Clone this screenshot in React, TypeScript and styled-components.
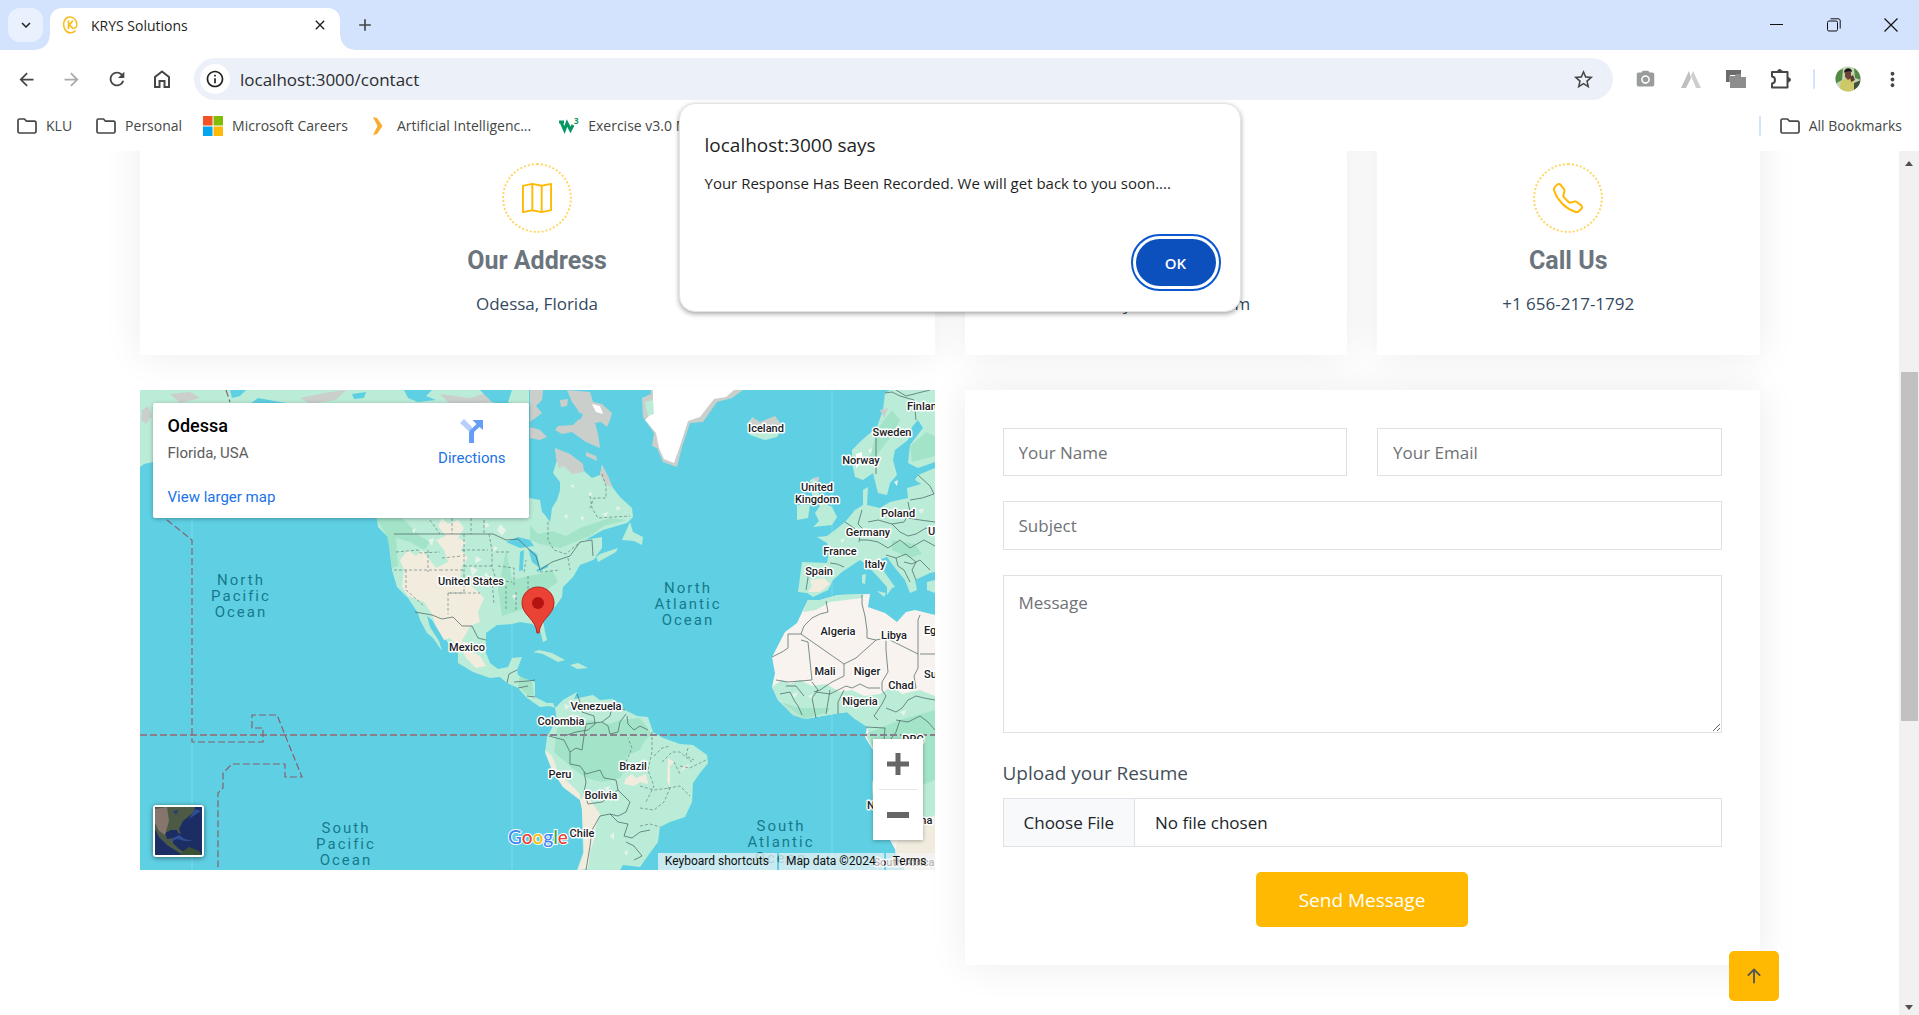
import React from "react";
import styled, { createGlobalStyle, css } from "styled-components";
import { BsMap, BsTelephone, BsEnvelope, BsArrowUpShort } from "react-icons/bs";
import {
  MdArrowBack,
  MdArrowForward,
  MdRefresh,
  MdInfoOutline,
  MdStarBorder,
  MdMoreVert,
  MdClose,
  MdAdd,
  MdPhotoCamera,
  MdKeyboardArrowDown,
} from "react-icons/md";

const ui = `"Open Sans", "Noto Sans", sans-serif`;
const roboto = `Roboto, "Liberation Sans", sans-serif`;
const amber = "#ffb902";
const ink = "#444746";

const GlobalStyle = createGlobalStyle`
  *, *::before, *::after { box-sizing: border-box; }
  body { margin: 0; background: #fff; font-family: ${ui}; overflow: hidden; }
  button, input, textarea { font-family: inherit; }
  h1, h2, h3, p { margin: 0; }
`;

/* ---------- browser frame ---------- */

const Window = styled.div`
  position: relative;
  display: flex;
  flex-direction: column;
  height: 100vh;
`;

const TabStrip = styled.header`
  display: flex;
  align-items: flex-end;
  height: 50px;
  padding: 0 0 0 8px;
  background: #d3e3fd;
`;

const plainButton = css`
  display: inline-flex;
  align-items: center;
  justify-content: center;
  padding: 0;
  border: 0;
  background: none;
  color: ${ink};
`;

const TabSearch = styled.button`
  ${plainButton}
  width: 35px;
  height: 34px;
  margin: 0 7px 8px 0;
  border-radius: 12px;
  background: #e9f1fe;
  color: #1f1f1f;
`;

const Tab = styled.div`
  position: relative;
  display: flex;
  align-items: center;
  gap: 12px;
  width: 290px;
  height: 42px;
  padding: 0 12px 8px;
  border-radius: 12px 12px 0 0;
  background: #fff;
  color: #1f1f1f;
  font-size: 14px;

  &::before,
  &::after {
    content: "";
    position: absolute;
    bottom: 0;
    width: 14px;
    height: 14px;
  }
  &::before {
    right: 100%;
    background: radial-gradient(circle at 0 0, transparent 13px, #fff 14px);
  }
  &::after {
    left: 100%;
    background: radial-gradient(circle at 100% 0, transparent 13px, #fff 14px);
  }
`;

const TabTitle = styled.span`
  flex: 1;
`;

const TabButton = styled.button`
  ${plainButton}
  width: 16px;
  height: 20px;
  color: #1f1f1f;
`;

const NewTab = styled.button`
  ${plainButton}
  width: 34px;
  height: 34px;
  margin: 0 auto 8px 8px;
`;

const WindowButton = styled.button`
  ${plainButton}
  width: 57px;
  height: 50px;
  color: #111;
`;

const Toolbar = styled.nav`
  display: flex;
  align-items: center;
  height: 58px;
  padding: 0 4px;
  background: #fff;
`;

const ToolButton = styled.button<{ $dim?: boolean }>`
  ${plainButton}
  width: 45px;
  height: 42px;
  color: ${(p) => (p.$dim ? "#a9abab" : ink)};
`;

const Omnibox = styled.div`
  display: flex;
  flex: 1;
  align-items: center;
  gap: 10px;
  height: 42px;
  margin: 0 10px;
  padding: 0 18px 0 6px;
  border-radius: 21px;
  background: #ecf0f9;
`;

const SiteInfo = styled.button`
  ${plainButton}
  width: 30px;
  height: 30px;
  border-radius: 50%;
  background: #fff;
  color: #1f1f1f;
`;

const Address = styled.input`
  flex: 1;
  border: 0;
  padding: 0;
  background: none;
  color: #2b2d2e;
  font-size: 17px;
  outline: 0;
`;

const Divider = styled.span<{ $gap: number }>`
  width: 2px;
  height: 20px;
  margin: 0 ${(p) => p.$gap}px;
  border-radius: 1px;
  background: #d3e3fd;
`;

const Bookmarks = styled.nav`
  display: flex;
  align-items: center;
  height: 43px;
  padding: 0 17px 8px;
`;

const Bookmark = styled.a<{ $end: number }>`
  display: inline-flex;
  align-items: center;
  gap: 9px;
  margin-right: ${(p) => p.$end}px;
  color: ${ink};
  font-size: 14px;
  line-height: 20px;
  white-space: nowrap;
  text-decoration: none;
`;

const BookmarkSpacer = styled.span`
  flex: 1;
`;

/* ---------- page ---------- */

const Viewport = styled.div`
  display: flex;
  flex: 1;
  min-height: 0;
`;

const Page = styled.main`
  position: relative;
  flex: 1;
  overflow: hidden;
  background: #fff;
`;

const Container = styled.div`
  display: grid;
  grid-template-columns: repeat(12, 1fr);
  align-items: start;
  gap: 35px 30px;
  max-width: 1650px;
  margin: -38px auto 0;
  padding: 0 15px;
`;

const card = css`
  background: #fff;
  box-shadow: 0 0 37px rgba(0, 0, 0, 0.08);
`;

const InfoCard = styled.section<{ $span: number }>`
  ${card}
  grid-column: span ${(p) => p.$span};
  display: flex;
  flex-direction: column;
  align-items: center;
  padding: 50px 0 37px;
`;

const IconRing = styled.span`
  display: grid;
  place-items: center;
  width: 70px;
  height: 70px;
  border: 2px dotted #ffd565;
  border-radius: 50%;
  color: ${amber};
`;

const InfoTitle = styled.h3`
  margin-top: 13px;
  color: #6c757d;
  font: 700 25px/30px ${roboto};
`;

const InfoText = styled.p`
  margin-top: 14px;
  color: #34495e;
  font-size: 17px;
  line-height: 28px;
`;

const FormCard = styled.form`
  ${card}
  grid-column: span 6;
  display: grid;
  grid-template-columns: 1fr 1fr;
  gap: 25px 30px;
  padding: 38px;
`;

const field = css`
  width: 100%;
  border: 1px solid #dee2e6;
  border-radius: 0;
  background: #fff;
  color: #212529;
  font-size: 17px;
  &::placeholder {
    color: #6f7275;
    opacity: 1;
  }
`;

const Field = styled.input<{ $wide?: boolean }>`
  ${field}
  height: ${(p) => (p.$wide ? 49 : 48)}px;
  padding: 0 15px;
  grid-column: ${(p) => (p.$wide ? "1 / -1" : "auto")};
`;

const Message = styled.textarea`
  ${field}
  display: block;
  grid-column: 1 / -1;
  height: 158px;
  padding: 12px 15px;
  line-height: 29px;
  resize: vertical;
`;

const Upload = styled.div`
  grid-column: 1 / -1;
  display: grid;
  gap: 10px;
`;

const UploadLabel = styled.label`
  color: #444f5a;
  font-size: 19px;
  line-height: 30px;
`;

const FileInput = styled.input`
  ${field}
  height: 49px;
  line-height: 47px;
  &::file-selector-button {
    height: 47px;
    margin: 0 20px 0 0;
    padding: 0 20px;
    border: 0;
    border-right: 1px solid #dee2e6;
    background: #f8f9fa;
    color: #212529;
    font: inherit;
  }
`;

const Send = styled.button`
  grid-column: 1 / -1;
  justify-self: center;
  height: 55px;
  padding: 0 43px;
  border: 0;
  border-radius: 5px;
  background: ${amber};
  color: #fff;
  font-size: 19px;
  font-weight: 500;
`;

const BackToTop = styled.a`
  position: absolute;
  right: 120px;
  bottom: 14px;
  display: grid;
  place-items: center;
  width: 50px;
  height: 50px;
  border-radius: 5px;
  background: ${amber};
  color: #555;
`;

const Scrollbar = styled.aside`
  display: flex;
  flex-direction: column;
  align-items: center;
  width: 20px;
  background: #f1f1f1;
`;

const ScrollArrow = styled.span<{ $down?: boolean }>`
  width: 0;
  height: 0;
  margin: ${(p) => (p.$down ? "auto 0 5px" : "10px 0 0")};
  border: 4px solid transparent;
  border-width: ${(p) => (p.$down ? "5px 4px 0" : "0 4px 5px")};
  border-color: ${(p) => (p.$down ? "#505050 transparent transparent" : "transparent transparent #505050")};
`;

const ScrollThumb = styled.span`
  width: 17px;
  height: 349px;
  margin-top: 206px;
  background: #c1c1c1;
`;

/* ---------- map ---------- */

const MapFrame = styled.section`
  position: relative;
  grid-column: span 6;
  height: 480px;
  overflow: hidden;
  background: #5fd0e4;
  font-family: ${roboto};
`;

const MapDrawing = styled.svg`
  display: block;
  width: 100%;
  height: 100%;
`;

const PlaceCard = styled.div`
  position: absolute;
  top: 13px;
  left: 13px;
  display: flex;
  justify-content: space-between;
  width: 376px;
  height: 115px;
  padding: 10px 23px 10px 15px;
  border-radius: 2px;
  background: #fff;
  box-shadow: 0 1px 4px rgba(0, 0, 0, 0.3);
`;

const PlaceText = styled.div`
  display: flex;
  flex-direction: column;
`;

const PlaceName = styled.h2`
  color: #000;
  font-size: 18px;
  font-weight: 500;
  line-height: 26px;
`;

const PlaceRegion = styled.p`
  margin-top: 4px;
  color: #5b5b5b;
  font-size: 15px;
  line-height: 20px;
`;

const MapLink = styled.a`
  color: #1a73e8;
  font-size: 15px;
  line-height: 20px;
  text-decoration: none;
`;

const LargerMap = styled(MapLink)`
  margin-top: 24px;
`;

const Directions = styled(MapLink)`
  display: flex;
  flex-direction: column;
  align-items: center;
  gap: 5px;
  padding-top: 6px;
`;

const ZoomBox = styled.div`
  position: absolute;
  right: 12px;
  bottom: 30px;
  display: flex;
  flex-direction: column;
  width: 50px;
  padding: 0 6px;
  background: #fff;
  box-shadow: 0 1px 4px rgba(0, 0, 0, 0.3);
`;

const ZoomButton = styled.button`
  ${plainButton}
  height: 50px;
  & + & {
    height: 51px;
    border-top: 1px solid #e6e6e6;
  }
`;

const Satellite = styled.button`
  position: absolute;
  bottom: 13px;
  left: 13px;
  width: 51px;
  height: 52px;
  padding: 0;
  overflow: hidden;
  border: 2px solid #fff;
  border-radius: 3px;
  background: #1a2b5e;
  box-shadow: 0 1px 5px rgba(0, 0, 0, 0.5);
`;

const Attribution = styled.div`
  position: absolute;
  right: 0;
  bottom: 0;
  display: flex;
  gap: 2px;
  height: 17px;
`;

const Credit = styled.a`
  padding: 0 8px 0 7px;
  background: rgba(245, 245, 245, 0.7);
  color: #111;
  font-size: 12px;
  line-height: 17px;
  text-decoration: none;
`;

const LAND = "#bbecd8";
const GREEN = "#93e0bf";
const SAND = "#f2ecdf";
const DESERT = "#f8f3ee";
const ROCK = "#cbcfcb";

const lands = [
  // North and Central America
  "M237 128L238 137L248 147L250 163L252 180L257 197L268 208L278 223L280 230L287 243L293 248L302 261L299 251L290 237L287 226L292 230L300 243L310 255L318 263L318 273L333 282L350 288L360 287L367 293L378 298L387 308L400 317L410 316L415 318L413 313L407 313L395 307L395 292L383 288L378 285L377 280L382 267L372 268L368 277L358 279L350 273L346 263L346 243L357 235L372 234L380 232L392 234L400 240L403 252L407 250L405 242L403 230L400 223L415 217L422 207L423 197L433 187L440 175L453 170L460 164L478 158L476 162L458 172L456 166L462 158L462 147L445 150L463 140L487 133L493 127L492 118L480 107L473 98L468 87L462 75L460 85L452 88L443 80L430 66L415 58L417 70L413 83L420 92L420 100L417 110L412 118L411 126L410 132L405 125L402 122L400 110L389 108L300 60L240 90Z",
  // Alaska and the Arctic shore
  "M0 0L389 0L389 36L380 24L372 16L330 14L13 14L13 72L4 74L0 77Z",
  // Newfoundland
  "M490 132L493 142L503 147L502 155L494 151L482 150Z",
  // Caribbean
  "M393 262L399 260L412 263L425 270L418 272L403 264Z",
  "M430 275L438 273L448 278L437 279Z",
  // South America
  "M415 318L423 310L437 302L434 309L453 305L460 310L473 309L485 320L497 326L508 327L513 342L523 348L540 354L553 355L567 365L568 373L560 383L553 393L552 412L545 427L530 432L520 437L518 452L507 467L500 477L483 475L480 480L437 480L443 463L442 417L440 410L423 397L412 380L405 363L407 347L412 338L417 330Z",
  // Scandinavia and Finland
  "M745 3L743 20L737 37L722 50L712 60L712 73L715 87L723 90L733 83L738 103L747 105L750 93L757 85L753 70L755 60L768 50L772 37L778 30L783 38L770 55L768 73L778 78L795 72L795 0L750 0Z",
  // Continental Europe
  "M795 78L778 85L775 90L781 94L767 98L768 108L750 112L740 118L727 115L728 97L723 100L723 115L715 120L705 132L695 140L687 146L677 147L687 153L689 162L687 173L662 172L658 202L667 203L673 207L688 200L693 190L702 182L711 176L720 170L727 175L738 187L747 197L747 205L752 198L755 197L743 180L738 170L747 167L755 178L765 190L770 203L777 200L775 190L790 183L795 182Z",
  "M787 192L795 190L795 203L787 200Z",
  "M737 201L746 203L744 207Z",
  "M722 185L726 184L725 194L722 193Z",
  // Britain and Ireland
  "M670 90L679 87L677 100L684 113L692 117L697 127L692 135L673 137L679 131L675 123L680 116L672 105Z",
  "M657 115L670 115L668 128L657 130Z",
  "M607 34L612 28L620 33L635 27L643 37L637 47L625 50L610 45Z",
];

const africa =
  "M668 210L680 210L698 205L730 204L728 217L745 223L757 232L766 222L775 220L795 225L795 480L765 480L757 463L750 450L733 410L732 393L738 378L733 360L725 347L727 337L723 329L715 329L707 322L693 324L665 329L653 325L638 310L632 297L635 283L632 267L645 242L657 233L663 220Z";

const greenPatches = [
  "M236 128L262 128L280 146L290 152L284 160L270 152L256 148L258 176L252 178L250 160L246 145Z",
  "M366 160L372 190L388 186L400 184L412 180L418 192L404 202L400 214L386 218L362 226L358 200Z",
  "M390 135L398 144L412 141L426 146L440 138L452 134L470 128L486 130L464 136L450 146L435 152L420 158L400 154L390 150Z",
  "M417 338L434 334L450 330L470 334L480 330L500 328L512 344L504 352L500 360L486 366L488 376L480 388L462 392L446 388L432 378L414 362Z",
  "M725 344L760 330L795 320L795 390L770 400L745 380Z",
  "M640 312L660 318L690 318L688 322L665 329L653 325Z",
  "M738 38L752 20L760 30L750 48L736 66L728 74Z",
  "M770 56L786 42L795 46L795 66L772 72Z",
  "M752 150L775 154L782 164L770 168L752 160Z",
  "M380 286L392 292L394 306L386 304L378 296Z",
  "M378 30L389 36L389 14L380 14Z",
];

const sandPatches = [
  "M302 128L308 134L318 130L324 138L318 148L326 152L321 160L328 168L322 176L320 190L330 194L344 208L338 222L340 232L330 236L326 244L318 256L310 248L304 250L296 236L292 224L284 212L268 206L262 196L264 180L260 170L268 160L276 166L282 160L290 170L296 178L308 172L304 160L296 150L306 146L298 136Z",
  "M318 250L326 252L334 256L332 262L340 266L346 276L336 278L326 268Z",
  "M440 410L446 404L460 424L456 436L454 450L450 462L448 478L438 480L444 462L442 420Z",
  "M405 360L412 366L418 382L430 394L440 404L440 410L423 397L412 380Z",
  "M486 388L492 384L496 388L506 384L508 394L500 392L494 396L484 394Z",
  "M528 368L534 372L530 376L530 398L527 390Z",
  "M540 382L546 378L550 374L544 376Z",
  "M670 190L684 188L690 194L680 202L668 202L672 196Z",
  "M760 440L795 425L795 480L765 480L755 462Z",
];

// Small clearings that break up the forest tint
const speckles =
  "M272 140L276 138L274 144Z M346 132L350 136L344 138Z M360 134L366 140L362 146L357 140Z M336 166L342 170L335 173Z M354 156L358 158L353 162Z M372 206L376 204L375 210Z M288 150L294 148L292 156Z M330 176L338 180L332 186Z M346 182L350 188L344 186Z M430 96L433 94L434 98Z M448 104L452 102L451 107Z M424 126L428 124L427 129Z M462 124L468 122L466 127Z M440 128L444 126L443 131Z M476 116L481 118L477 121Z M424 314L430 316L426 320Z M446 312L454 314L450 318Z M466 316L470 314L469 320Z M432 324L437 326L431 329Z M464 398L470 396L468 402Z M500 372L505 368L504 375Z M470 446L474 442L474 450Z M484 462L488 460L487 466Z M754 92L758 90L757 96Z M728 60L732 58L731 64Z M778 120L784 118L782 124Z M700 150L704 148L703 153Z M652 304L658 302L655 308Z M668 306L672 304L672 310Z M760 322L766 320L764 326Z";

const rocks = [
  "M390 0L403 0L402 10L396 16L402 23L390 32Z",
  "M427 0L450 2L453 12L462 14L472 23L470 30L467 37L461 32L455 33L458 44L460 58L446 52L432 42L422 44L415 40L418 36L433 35L440 28L438 20L432 12Z",
  "M390 37L400 40L407 47L400 50L390 48Z",
  "M415 58L430 64L443 74L444 82L432 84L424 76L419 78L416 68Z",
  "M462 75L469 88L472 98L466 94L460 85Z",
  "M2 20L8 16L12 26L6 34L1 30Z",
  "M30 4L50 2L60 8L40 13Z M160 8L190 2L206 0L196 10L170 14Z M300 4L330 8L350 2L360 12L310 14Z",
  "M420 10L428 9L427 16L421 17Z",
  "M740 20L748 18L744 28Z",
  "M612 27L620 32L635 26L643 37L630 38L622 34L610 36Z",
  "M446 62L456 66L457 71L446 66Z",
  "M672 88L679 87L678 92Z",
];

const waterPatches = [
  "M90 0L106 0L100 6L92 8Z M118 8L146 13L110 14Z M264 0L292 0L286 6L296 10L278 12L268 8Z M340 0L372 0L368 12L380 20L352 12Z M212 4L226 2L224 8L214 9Z",
  "M366 152L378 147L390 150L394 156L380 158Z M380 162L384 160L383 180L379 181Z M388 158L397 164L400 178L392 172Z M396 180L408 174L408 177L398 182Z",
  "M438 22L443 24L440 30L436 27Z",
];

const borders = [
  "M254 144L353 144L366 150L378 149L396 166L400 180L412 172L430 166L440 152L452 150L453 166",
  "M275 222L292 225L302 229L313 227L322 236L332 236L338 248L346 250",
  "M367 293L369 284L377 280M374 292L388 291L395 290M378 298L388 296M387 306L395 307",
  "M437 304L440 312L442 322L454 326L455 334L448 340L436 342L424 346M485 320L472 316L470 326L462 332L446 334L444 346L442 360L436 358L430 362L424 350L409 346",
  "M430 362L430 374L440 376L446 384L460 380L464 388L476 390L478 400L470 406L462 412L448 414L444 402L446 392L444 382M478 400L490 412L486 422L478 426L470 424L460 426L452 440L450 456L446 480",
  "M470 424L478 432L488 434L484 446L492 448L500 442L510 440M486 452L494 456L502 466L494 470",
  "M487 326L488 334L494 340L500 336L508 340M462 332L468 336L470 344L478 342L480 332L486 324",
  "M736 38L736 84M745 3L752 2L760 6L774 10L776 30M756 0L766 6L782 2L790 0",
  "M722 120L718 134L724 140L716 144M705 132L714 138L720 146L719 152M768 112L770 122L764 132L752 134L738 130L728 132M778 85L790 96L794 104L782 108L770 110M768 128L780 130L795 132M752 134L760 142L768 146L776 144L786 138L795 140",
  "M720 150L728 150L738 152L748 158L760 150L770 158L784 150L795 156M690 173L697 174L704 177M667 177L668 188L666 200M746 165L756 168L758 176L764 180L770 192M764 172L772 174L780 170L790 180M756 168L766 164L776 172L772 180L776 190",
  "M686 211L688 222L680 224L672 228L664 236L661 244L704 274L716 268L736 250L727 248L727 240L725 226L722 214L722 205M661 244L648 244L648 258L642 262L632 267M661 250L668 252L672 290L648 292L636 290M704 274L704 286L692 292L680 300L674 302M736 250L746 248L746 260L748 282L742 292L742 300L746 306L742 314L734 326L738 330M746 248L762 256L778 264L778 230L780 225",
  "M778 264L778 278L774 286L776 298L770 300M780 264L795 264M706 296L712 298L720 294L728 298L740 298M704 300L698 312L698 324M690 300L686 324M672 292L678 300L672 308L676 328M676 302L690 304L706 296M640 304L650 302L654 310L658 316L662 325M646 296L656 296L664 306",
  "M726 337L745 338L744 350L736 352M746 318L756 322L762 318L768 310L776 306L784 308L795 310M756 330L768 332L780 326L788 332L795 340M760 330L756 342L750 350",
];

const stateLines =
  "M256 162L278 160L280 163L300 162M254 180L300 180M266 180L266 200L284 216M288 160L288 182M290 130L300 144M312 128L312 144M324 144L324 203L308 203L308 224M302 168L322 166M331 128L331 144M344 130L344 144M322 160L348 160M300 180L324 180M308 203L340 203M324 176L352 176M349 144L352 160L352 176L356 190M328 190L356 190M352 190L354 214M356 162L370 162M358 176L374 178L374 196M356 190L372 192M366 196L366 220M376 202L376 220M388 186L388 202L410 202M390 212L404 218M384 182L386 170M400 182L420 180M428 168L430 180M408 132L408 150L414 160L426 164L440 152M450 106L452 118L458 128L490 126M462 84L466 96L466 108L454 108L450 118";

const brazilLines =
  "M486 372L492 358L488 348M512 342L512 362L508 380L514 396L506 412M514 366L522 358L530 356M522 372L532 362L540 362L552 372M534 372L540 384M528 398L540 396L550 406M500 396L514 400L530 398L524 412L514 420L500 418M540 376L550 378L566 370M500 436L510 434L520 437M548 358L546 366L554 370";

const dateLine =
  "M27 130L52 150L52 352L123 352L123 338L112 338L112 325L137 325L162 387L145 387L145 374L92 374L83 383L83 398L78 403L78 480M86 0L90 12";

type Label = { text: string; x: number; y: number; start?: boolean };

const countries: Label[] = [
  { text: "United States", x: 331, y: 195 },
  { text: "Iceland", x: 626, y: 42 },
  { text: "Finland", x: 767, y: 20, start: true },
  { text: "Sweden", x: 752, y: 46 },
  { text: "Norway", x: 721, y: 74 },
  { text: "United", x: 677, y: 101 },
  { text: "Kingdom", x: 677, y: 113 },
  { text: "Poland", x: 758, y: 127 },
  { text: "Germany", x: 728, y: 146 },
  { text: "Ukraine", x: 788, y: 145, start: true },
  { text: "France", x: 700, y: 165 },
  { text: "Italy", x: 735, y: 178 },
  { text: "Spain", x: 679, y: 185 },
  { text: "Mexico", x: 327, y: 261 },
  { text: "Algeria", x: 698, y: 245 },
  { text: "Libya", x: 754, y: 249 },
  { text: "Egypt", x: 784, y: 244, start: true },
  { text: "Mali", x: 685, y: 285 },
  { text: "Niger", x: 727, y: 285 },
  { text: "Chad", x: 761, y: 299 },
  { text: "Sudan", x: 784, y: 288, start: true },
  { text: "Nigeria", x: 720, y: 315 },
  { text: "DRC", x: 773, y: 353 },
  { text: "Venezuela", x: 456, y: 320 },
  { text: "Colombia", x: 421, y: 335 },
  { text: "Brazil", x: 493, y: 380 },
  { text: "Peru", x: 420, y: 388 },
  { text: "Bolivia", x: 461, y: 409 },
  { text: "Chile", x: 442, y: 447 },
  { text: "Namibia", x: 727, y: 419, start: true },
  { text: "Botswana", x: 768, y: 434 },
  { text: "South Africa", x: 764, y: 476 },
];

const oceans = [
  { x: 101, y: 195, lines: ["North", "Pacific", "Ocean"] },
  { x: 548, y: 203, lines: ["North", "Atlantic", "Ocean"] },
  { x: 206, y: 443, lines: ["South", "Pacific", "Ocean"] },
  { x: 641, y: 441, lines: ["South", "Atlantic", "Ocean"] },
];

const CountryText = styled.text`
  fill: #202124;
  stroke: #fff;
  stroke-width: 3px;
  stroke-linejoin: round;
  paint-order: stroke;
  font: 500 11px ${roboto};
`;

const OceanText = styled.text`
  fill: #17798c;
  font: 400 15px ${roboto};
  letter-spacing: 2px;
  text-anchor: middle;
`;

const GoogleText = styled.text`
  stroke: #fff;
  stroke-width: 2px;
  paint-order: stroke;
  font: 500 19px Lato, ${roboto};
`;

const google: [string, string][] = [
  ["G", "#4285f4"],
  ["o", "#ea4335"],
  ["o", "#fbbc05"],
  ["g", "#4285f4"],
  ["l", "#34a853"],
  ["e", "#ea4335"],
];

function WorldMap() {
  return (
    <MapDrawing viewBox="0 0 795 480" preserveAspectRatio="xMidYMid slice" role="img" aria-label="Map of Odessa, Florida">
      <path d="M52 0V480M372 0V480M692 0V480" stroke="#7fd9e9" />
      {lands.map((d) => <path key={d} d={d} fill={LAND} />)}
      <path d={africa} fill={DESERT} />
      <path d="M632 297L642 290L650 294L660 290L672 296L686 294L700 302L712 300L724 306L740 304L752 296L762 304L780 300L795 306L795 440L750 450L733 410L732 393L738 378L727 337L715 329L707 322L665 329L638 310Z" fill={LAND} />
      <path d="M668 210L680 210L698 205L724 204L722 208L690 212L676 220L663 222Z" fill={LAND} />
      {greenPatches.map((d) => <path key={d} d={d} fill={GREEN} opacity={0.6} />)}
      {sandPatches.map((d) => <path key={d} d={d} fill={SAND} />)}
      <path d={speckles} fill="#e6f3ea" />
      {rocks.map((d) => <path key={d} d={d} fill={ROCK} />)}
      {waterPatches.map((d) => <path key={d} d={d} fill="#5fd0e4" />)}
      <path d="M511 0L603 0L592 8L577 12L563 32L550 33L542 57L537 77L523 72L517 58L512 56L514 43L503 27L502 8L511 4Z" fill={ROCK} />
      <path d="M513 0L594 0L586 7L574 9L560 27L548 31L540 56L534 73L524 69L519 58L516 43L505 30L513 22Z" fill="#fff" />
      <path d="M505 12L513 10L514 24L508 26Z" fill={LAND} />
      <path d="M452 14L460 16L463 24L456 22Z M716 64L722 62L722 72L716 78Z" fill="#fff" />
      <g fill="none" stroke="#46605f" strokeWidth="0.700">
        {borders.map((d) => <path key={d} d={d} />)}
        <path d={stateLines} strokeDasharray="3 2" opacity={0.75} />
        <path d={brazilLines} strokeDasharray="3 2" opacity={0.75} />
      </g>
      <path d="M0 345H795" stroke="#8a7f8d" strokeWidth="2" strokeDasharray="7 3" />
      <path d={dateLine} fill="none" stroke="#85616c" strokeWidth="1.200" strokeDasharray="7 3" />
      {oceans.map((o) => (
        <OceanText key={o.x}>
          {o.lines.map((line, i) => (
            <tspan key={line} x={o.x} y={o.y + i * 16}>{line}</tspan>
          ))}
        </OceanText>
      ))}
      {countries.map((c) => (
        <CountryText key={c.text} x={c.x} y={c.y} textAnchor={c.start ? "start" : "middle"}>{c.text}</CountryText>
      ))}
      <path d="M398 197C389 197 382 204 382 213C382 225 396 229 397 243H399C400 229 414 225 414 213C414 204 407 197 398 197Z" fill="#ea4335" stroke="#b8241a" />
      <circle cx="398" cy="213" r="6" fill="#b31412" />
      <GoogleText x="368" y="454">
        {google.map(([letter, color], i) => <tspan key={i} fill={color}>{letter}</tspan>)}
      </GoogleText>
    </MapDrawing>
  );
}

/* ---------- dialog ---------- */

const Dialog = styled.section`
  position: absolute;
  top: 103px;
  right: 0;
  left: 0;
  display: flex;
  flex-direction: column;
  width: 562px;
  height: 209px;
  margin: 0 auto;
  padding: 28px 25px;
  padding-right: 24px;
  padding-bottom: 25px;
  border: 1px solid #e2e4e4;
  border-radius: 16px;
  background: #fff;
  box-shadow: 0 2px 5px rgba(0, 0, 0, 0.35);
  color: #1f1f1f;
`;

const DialogTitle = styled.h1`
  font-size: 19px;
  font-weight: 500;
  line-height: 26px;
`;

const DialogText = styled.p`
  margin-top: 15px;
  font-size: 15px;
  line-height: 20px;
`;

const Ok = styled.button`
  align-self: flex-end;
  width: 80px;
  height: 47px;
  margin-top: auto;
  border: 0;
  border-radius: 24px;
  background: #0b50bd;
  color: #fff;
  font-size: 15px;
  font-weight: 600;
  outline: 2px solid #0b57d0;
  outline-offset: 3px;
`;

/* ---------- small drawings ---------- */

const Favicon = () => (
  <svg width="17" height="18" viewBox="0 0 17 18" fill="none" stroke="#fbbc1c">
    <path d="M13.500 14.500C11 17.800 5.500 17.800 3 13.500C0.500 9 1.500 3 6 1.300C11 0 14.500 3.500 14.800 8C14.900 11 13.500 12.600 12 12" strokeWidth="1.500" />
    <path d="M6.500 4.500V13M11 4.500L7.200 9L11.500 12.800" strokeWidth="1.700" />
  </svg>
);

const HomeIcon = () => (
  <svg width="20" height="20" viewBox="0 0 20 20" fill="none" stroke="currentColor" strokeWidth="2">
    <path d="M3 18V8L10 2.500L17 8V18H12.500V12H7.500V18Z" />
  </svg>
);

const FolderIcon = () => (
  <svg width="20" height="16" viewBox="0 0 20 16" fill="none" stroke="currentColor" strokeWidth="1.700" strokeLinejoin="round">
    <path d="M2.500 1H7.500L9.500 3.200H17.500C18.500 3.200 19 3.700 19 4.500V13.500C19 14.500 18.500 15 17.500 15H2.500C1.500 15 1 14.500 1 13.500V2.500C1 1.500 1.500 1 2.500 1Z" />
  </svg>
);

const PuzzleIcon = () => (
  <svg width="22" height="22" viewBox="0 0 22 22" fill="none" stroke="currentColor" strokeWidth="2" strokeLinejoin="round">
    <path d="M2 4H17.500V19.500H2V15.500C6 15 6 9 2 8.500Z" />
    <path d="M7.500 4C7.500 0.500 12 0.500 12 4ZM17.500 9.500C21.500 9.500 21.500 14 17.500 14Z" fill="currentColor" strokeWidth="1" />
  </svg>
);

const MicrosoftLogo = () => (
  <svg width="20" height="20" viewBox="0 0 20 20">
    <path d="M0 0H9.500V9.500H0Z" fill="#f35325" />
    <path d="M10.500 0H20V9.500H10.500Z" fill="#81bc06" />
    <path d="M0 10.500H9.500V20H0Z" fill="#05a6f0" />
    <path d="M10.500 10.500H20V20H10.500Z" fill="#ffba08" />
  </svg>
);

const Chevron = () => (
  <svg width="20" height="20" viewBox="0 0 20 20">
    <path d="M5 1L9 2L14.500 10L9 18L5 19L9.500 10Z" fill="#f9ab30" />
  </svg>
);

const W3Logo = () => (
  <svg width="20" height="20" viewBox="0 0 20 20" fill="none" stroke="#059862">
    <path d="M0 6H5M2 6L5.500 14L8 7L11.500 14L14 9" strokeWidth="3" />
    <text x="15" y="8" fill="#059862" stroke="none" fontSize="8" fontWeight="700">3</text>
  </svg>
);

const PeaksIcon = () => (
  <svg width="20" height="18" viewBox="0 0 20 18">
    <path d="M0 18L8 1L10 8L5 18Z" fill="#bdbfc0" />
    <path d="M12 1L20 18H15L10 6Z" fill="#cccecf" />
  </svg>
);

const WindowsIcon = () => (
  <svg width="20" height="18" viewBox="0 0 20 18">
    <path d="M0 0H15V5H4V12H0Z" fill="#6c6c6c" />
    <path d="M3 6H9L10 4H15V7H20V18H4V12H3Z" fill="#8d8d8d" />
  </svg>
);

const Avatar = () => (
  <svg width="26" height="26" viewBox="0 0 26 26">
    <defs>
      <clipPath id="avatar"><circle cx="13" cy="13" r="12.500" /></clipPath>
    </defs>
    <g clipPath="url(#avatar)">
      <path d="M0 0H26V26H0Z" fill="#c3d5b4" />
      <path d="M0 6L8 3L7 14L0 18Z M19 2L26 6V14L20 12Z" fill="#548a45" />
      <path d="M4 26L6 15L12 12L19 14L20 26Z" fill="#cdc968" />
      <path d="M10 5H16V12L13 14L10 11Z" fill="#6c4434" />
      <path d="M9 7C9 1 17 1 17 6L15 5L10 6Z" fill="#151518" />
      <path d="M15 11L18 9L20 14L16 16Z" fill="#613b30" />
      <path d="M19 17L26 14V26H19Z" fill="#42533d" />
    </g>
  </svg>
);

const RestoreIcon = () => (
  <svg width="14" height="14" viewBox="0 0 14 14" fill="none" stroke="currentColor">
    <rect x="0.500" y="3" width="10" height="10" rx="1.500" />
    <path d="M3.500 0.800H11C12.500 0.800 13.200 1.500 13.200 3V10.500" />
  </svg>
);

const CloseIcon = () => (
  <svg width="14" height="14" viewBox="0 0 14 14" stroke="currentColor" strokeWidth="1.200">
    <path d="M0.500 0.500L13.500 13.500M13.500 0.500L0.500 13.500" />
  </svg>
);

const MinimizeIcon = () => (
  <svg width="13" height="2" viewBox="0 0 13 2">
    <path d="M0 0.500H13" stroke="currentColor" />
  </svg>
);

const DirectionsIcon = () => (
  <svg width="23" height="24" viewBox="0 0 23 24">
    <path d="M0 4L4 0L12 8V14L9.500 13Z" fill="#b7cffb" />
    <path d="M9 24V15C9 12 10 11 12 9.500L16.500 5L12.500 1H23V11L19.500 8L15 12C14 13 14 14 14 16V24Z" fill="#669df6" />
  </svg>
);

const SatelliteView = () => (
  <svg width="47" height="48" viewBox="0 0 47 48">
    <path d="M0 0H47V48H0Z" fill="#1c2d63" />
    <path d="M0 0H40L38 6L28 14L24 22L26 27L23 26L22 23L16 23L10 26L12 32L18 31L18 36L23 41L30 46L26 47L12 38L4 30L0 22Z" fill="#4c5a45" />
    <path d="M0 2L12 0L14 14L10 28L4 24L0 16Z" fill="#85756c" />
    <path d="M28 44L34 40L44 44L47 48H26Z" fill="#3a5136" />
    <path d="M24 28L30 32L38 34L30 34L22 32L16 35L18 31Z M40 2L46 4L34 12Z" fill="#2f4d92" />
    <path d="M18 4L24 3L21 8Z" fill="#26406e" />
  </svg>
);

export default function App() {
  return (
    <Window>
      <GlobalStyle />
      <TabStrip>
        <TabSearch aria-label="Search tabs"><MdKeyboardArrowDown size={18} /></TabSearch>
        <Tab>
          <Favicon />
          <TabTitle>KRYS Solutions</TabTitle>
          <TabButton aria-label="Close tab"><MdClose size={16} /></TabButton>
        </Tab>
        <NewTab aria-label="New tab"><MdAdd size={20} /></NewTab>
        <WindowButton aria-label="Minimize"><MinimizeIcon /></WindowButton>
        <WindowButton aria-label="Restore"><RestoreIcon /></WindowButton>
        <WindowButton aria-label="Close"><CloseIcon /></WindowButton>
      </TabStrip>

      <Toolbar>
        <ToolButton aria-label="Back"><MdArrowBack size={21} /></ToolButton>
        <ToolButton aria-label="Forward" $dim><MdArrowForward size={21} /></ToolButton>
        <ToolButton aria-label="Reload"><MdRefresh size={22} /></ToolButton>
        <ToolButton aria-label="Home"><HomeIcon /></ToolButton>
        <Omnibox>
          <SiteInfo aria-label="Site information"><MdInfoOutline size={20} /></SiteInfo>
          <Address aria-label="Address" defaultValue="localhost:3000/contact" />
          <MdStarBorder size={23} color={ink} />
        </Omnibox>
        <ToolButton aria-label="Screenshot" $dim><MdPhotoCamera size={21} color="#9a9c9c" /></ToolButton>
        <ToolButton aria-label="Peaks" $dim><PeaksIcon /></ToolButton>
        <ToolButton aria-label="Tab windows"><WindowsIcon /></ToolButton>
        <ToolButton aria-label="Extensions"><PuzzleIcon /></ToolButton>
        <Divider $gap={10} />
        <ToolButton aria-label="Profile"><Avatar /></ToolButton>
        <ToolButton aria-label="Menu"><MdMoreVert size={23} /></ToolButton>
      </Toolbar>

      <Bookmarks>
        <Bookmark href="#klu" $end={24}><FolderIcon />KLU</Bookmark>
        <Bookmark href="#personal" $end={21}><FolderIcon />Personal</Bookmark>
        <Bookmark href="#careers" $end={20}><MicrosoftLogo />Microsoft Careers</Bookmark>
        <Bookmark href="#ai" $end={28}><Chevron />Artificial Intelligenc...</Bookmark>
        <Bookmark href="#exercise" $end={0}><W3Logo />Exercise v3.0 M</Bookmark>
        <BookmarkSpacer />
        <Divider $gap={19} />
        <Bookmark href="#all" $end={0}><FolderIcon />All Bookmarks</Bookmark>
      </Bookmarks>

      <Viewport>
        <Page>
          <Container>
            <InfoCard $span={6}>
              <IconRing><BsMap size={30} /></IconRing>
              <InfoTitle>Our Address</InfoTitle>
              <InfoText>Odessa, Florida</InfoText>
            </InfoCard>
            <InfoCard $span={3}>
              <IconRing><BsEnvelope size={30} /></IconRing>
              <InfoTitle>Email Us</InfoTitle>
              <InfoText>info@kryssolutions.com</InfoText>
            </InfoCard>
            <InfoCard $span={3}>
              <IconRing><BsTelephone size={30} /></IconRing>
              <InfoTitle>Call Us</InfoTitle>
              <InfoText>+1 656-217-1792</InfoText>
            </InfoCard>

            <MapFrame>
              <WorldMap />
              <PlaceCard>
                <PlaceText>
                  <PlaceName>Odessa</PlaceName>
                  <PlaceRegion>Florida, USA</PlaceRegion>
                  <LargerMap href="#map">View larger map</LargerMap>
                </PlaceText>
                <Directions href="#directions"><DirectionsIcon />Directions</Directions>
              </PlaceCard>
              <Satellite aria-label="Show satellite imagery"><SatelliteView /></Satellite>
              <ZoomBox>
                <ZoomButton aria-label="Zoom in">
                  <svg width="22" height="22" viewBox="0 0 22 22"><path d="M0 11H22M11 0V22" stroke="#666" strokeWidth="5" /></svg>
                </ZoomButton>
                <ZoomButton aria-label="Zoom out">
                  <svg width="22" height="6" viewBox="0 0 22 6"><path d="M0 3H22" stroke="#666" strokeWidth="6" /></svg>
                </ZoomButton>
              </ZoomBox>
              <Attribution>
                <Credit href="#shortcuts">Keyboard shortcuts</Credit>
                <Credit href="#data">Map data ©2024</Credit>
                <Credit href="#terms">Terms</Credit>
              </Attribution>
            </MapFrame>

            <FormCard onSubmit={(e) => e.preventDefault()}>
              <Field aria-label="Your Name" placeholder="Your Name" />
              <Field aria-label="Your Email" type="email" placeholder="Your Email" />
              <Field $wide aria-label="Subject" placeholder="Subject" />
              <Message aria-label="Message" placeholder="Message" />
              <Upload>
                <UploadLabel htmlFor="resume">Upload your Resume</UploadLabel>
                <FileInput id="resume" type="file" />
              </Upload>
              <Send type="submit">Send Message</Send>
            </FormCard>
          </Container>
          <BackToTop href="#top" aria-label="Back to top"><BsArrowUpShort size={30} /></BackToTop>
        </Page>
        <Scrollbar aria-hidden>
          <ScrollArrow />
          <ScrollThumb />
          <ScrollArrow $down />
        </Scrollbar>
      </Viewport>

      <Dialog role="alertdialog" aria-labelledby="says" aria-describedby="says-text">
        <DialogTitle id="says">localhost:3000 says</DialogTitle>
        <DialogText id="says-text">Your Response Has Been Recorded. We will get back to you soon....</DialogText>
        <Ok>OK</Ok>
      </Dialog>
    </Window>
  );
}
